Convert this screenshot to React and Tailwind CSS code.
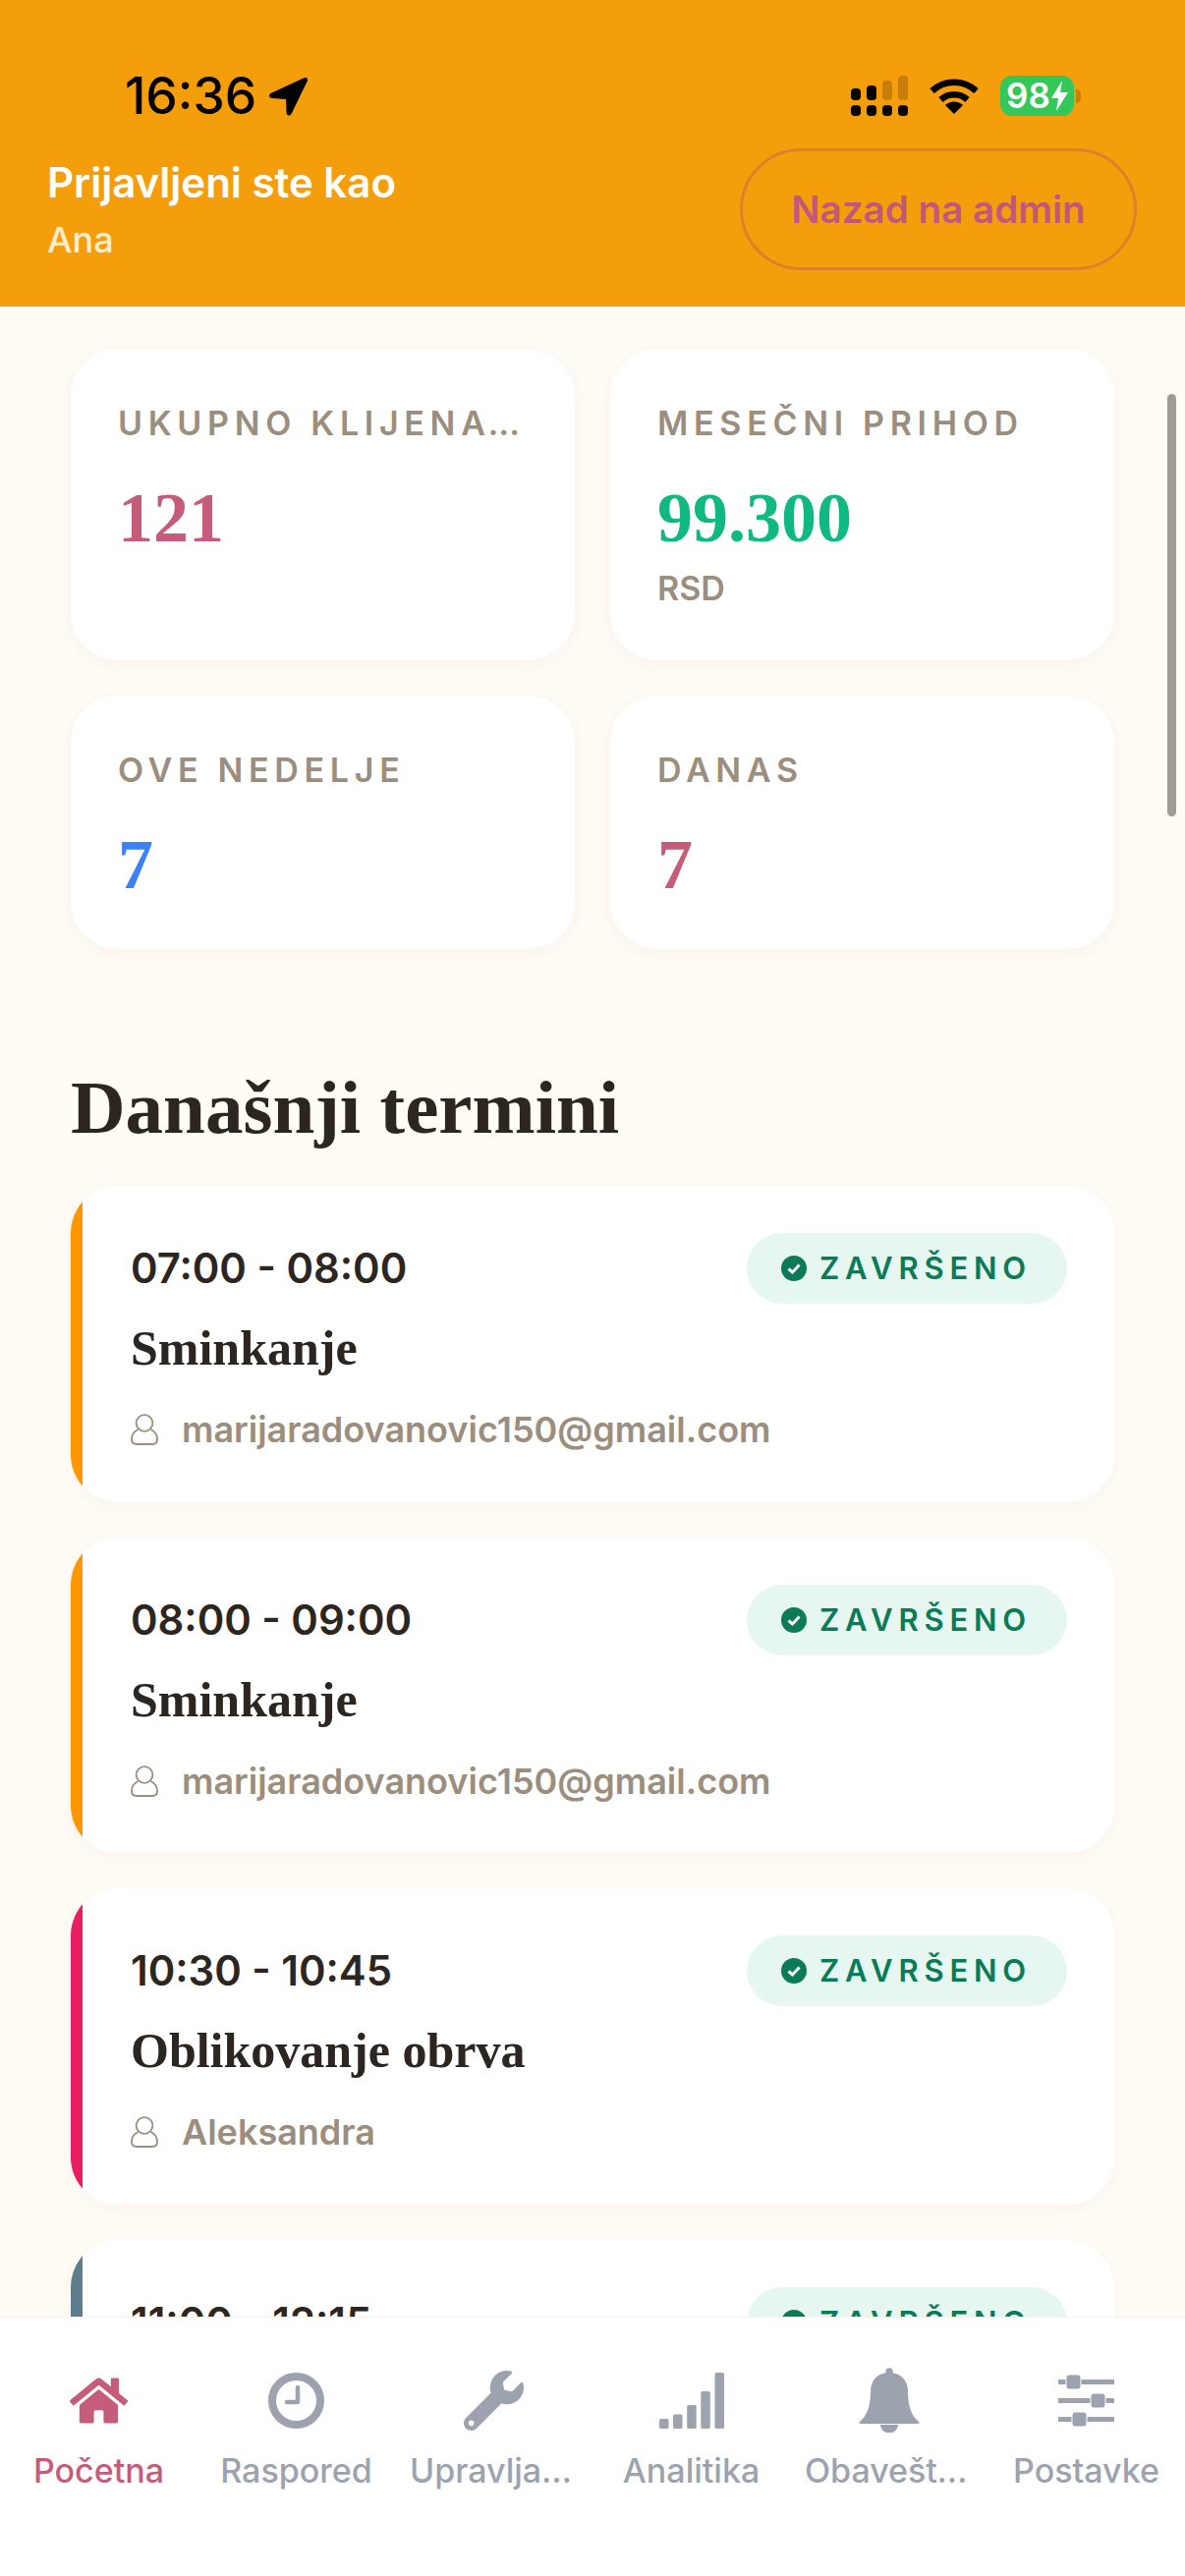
import { FaHome, FaWrench } from 'react-icons/fa'

const stats = [
  { label: 'UKUPNO KLIJENATA', value: '121', color: 'text-[#C45C7A]' },
  { label: 'MESEČNI PRIHOD', value: '99.300', color: 'text-[#10B981]', unit: 'RSD' },
  { label: 'OVE NEDELJE', value: '7', color: 'text-[#3B82F6]' },
  { label: 'DANAS', value: '7', color: 'text-[#C45C7A]' },
]

const appointments = [
  { time: '07:00 - 08:00', service: 'Sminkanje', client: 'marijaradovanovic150@gmail.com', stripe: 'bg-[#FF9800]' },
  { time: '08:00 - 09:00', service: 'Sminkanje', client: 'marijaradovanovic150@gmail.com', stripe: 'bg-[#FF9800]' },
  { time: '10:30 - 10:45', service: 'Oblikovanje obrva', client: 'Aleksandra', stripe: 'bg-[#E91E63]' },
  { time: '11:00 - 12:15', service: 'Sminkanje', client: 'Aleksandra', stripe: 'bg-[#607D8B]' },
]

function SignalIcon() {
  return (
    <svg width="58" height="41" viewBox="0 0 58 41">
      <rect x="0" y="13" width="10" height="12" rx="4" fill="#000" />
      <rect x="16" y="10" width="10" height="15" rx="4" fill="#000" />
      <rect x="32" y="5" width="10" height="20" rx="4" fill="#C77F0A" />
      <rect x="48" y="0" width="10" height="25" rx="4" fill="#C77F0A" />
      <rect x="0" y="30" width="10" height="11" rx="4" fill="#000" />
      <rect x="16" y="30" width="10" height="11" rx="4" fill="#000" />
      <rect x="32" y="30" width="10" height="11" rx="4" fill="#000" />
      <rect x="48" y="30" width="10" height="11" rx="4" fill="#000" />
    </svg>
  )
}

function WifiIcon() {
  return (
    <svg width="50" height="37" viewBox="0 0 50 37" fill="none">
      <path d="M2.5 13.5 A33 33 0 0 1 47.5 13.5" stroke="#000" strokeWidth="6.5" />
      <path d="M11.5 22.5 A20 20 0 0 1 38.5 22.5" stroke="#000" strokeWidth="6.5" />
      <path d="M25 37 L16 28 A13 13 0 0 1 34 28 Z" fill="#000" />
    </svg>
  )
}

function LocationArrow() {
  return (
    <svg width="40" height="40" viewBox="0 0 40 40">
      <path d="M35 1.5 C38 0 40 2 38.5 5 L23 37 C21 41 17.5 40 17.5 36 L17 23 L3 22 C-0.5 21.5 -1 18 2.5 16.5 Z" fill="#000" />
    </svg>
  )
}

function ClockIcon() {
  return (
    <svg width="57" height="57" viewBox="0 0 57 57" fill="none" stroke="currentColor">
      <circle cx="28.5" cy="28.5" r="24.5" strokeWidth="8" />
      <path d="M30 15 V30 H19" strokeWidth="4.5" strokeLinejoin="round" strokeLinecap="round" />
    </svg>
  )
}

function BarsIcon() {
  return (
    <svg width="66" height="57" viewBox="0 0 66 57" fill="currentColor">
      <rect x="0" y="47" width="9.5" height="10" rx="1.5" />
      <rect x="14" y="42.5" width="9.5" height="14.5" rx="1.5" />
      <rect x="28.2" y="33" width="9.5" height="24" rx="1.5" />
      <rect x="42.3" y="19" width="9.5" height="38" rx="1.5" />
      <rect x="56.5" y="0" width="9.5" height="57" rx="1.5" />
    </svg>
  )
}

function BellIcon() {
  return (
    <svg width="62" height="66" viewBox="0 0 62 66" fill="currentColor">
      <circle cx="31" cy="4" r="3.7" />
      <path d="M31 5 C20 5 12 12 12 24 C12 40 8 49 1 55 Q-0.5 57 2 57 L60 57 Q62.5 57 61 55 C54 49 50 40 50 24 C50 12 42 5 31 5 Z" />
      <path d="M22 58 A9 8.5 0 0 0 40 58 Z" />
    </svg>
  )
}

function SlidersIcon() {
  return (
    <svg width="57" height="53" viewBox="0 0 57 53" fill="currentColor">
      <rect x="0" y="5" width="57" height="5" />
      <rect x="8" y="0" width="15" height="15" rx="3" stroke="#fff" strokeWidth="1" />
      <rect x="0" y="24" width="57" height="5" />
      <rect x="33" y="19" width="15" height="15" rx="3" stroke="#fff" strokeWidth="1" />
      <rect x="0" y="43" width="57" height="5" />
      <rect x="14" y="38" width="15" height="15" rx="3" stroke="#fff" strokeWidth="1" />
    </svg>
  )
}

function PersonIcon() {
  return (
    <svg width="28" height="32" viewBox="0 0 28 32" fill="none" stroke="#9C8E7E" strokeWidth="1.8">
      <circle cx="14" cy="9.5" r="8.4" />
      <path d="M7.5 16 C3.5 18 1 21.5 1 26 C1 29.5 3 31 6 31 H22 C25 31 27 29.5 27 26 C27 21.5 24.5 18 20.5 16" />
    </svg>
  )
}

const tabs = [
  { label: 'Početna', icon: <FaHome size={59} />, active: true },
  { label: 'Raspored', icon: <ClockIcon /> },
  { label: 'Upravljanje', icon: <FaWrench size={61} /> },
  { label: 'Analitika', icon: <BarsIcon /> },
  { label: 'Obaveštenja', icon: <BellIcon /> },
  { label: 'Postavke', icon: <SlidersIcon /> },
]

function StatCard({ label, value, color, unit }) {
  return (
    <div className="min-w-0 rounded-[48px] bg-white px-[48px] pt-[56px] pb-[46px] shadow-[0_4px_16px_rgba(120,90,60,0.05)]">
      <div className="truncate text-[34px] leading-[40px] font-semibold tracking-[5.7px] text-[#9C8E7E]">{label}</div>
      <div className={`mt-[36px] font-['Liberation_Serif',serif] text-[72px] leading-[80px] font-bold ${color}`}>{value}</div>
      {unit && <div className="mt-[12px] pb-[7px] text-[34px] leading-[40px] font-semibold text-[#9C8E7E]">{unit}</div>}
    </div>
  )
}

function AppointmentCard({ time, service, client, stripe }) {
  return (
    <div className="flex h-[321.6px] shrink-0 overflow-hidden rounded-[48px] bg-white shadow-[0_4px_16px_rgba(120,90,60,0.04)]">
      <div className={`w-[12px] shrink-0 ${stripe}`} />
      <div className="min-w-0 flex-1 pl-[49px] pr-[48px] pt-[48px]">
        <div className="flex h-[72px] items-center justify-between">
          <span className="text-[41.8px] leading-[52px] font-semibold text-[#2D2520]">{time}</span>
          <span className="flex h-[72px] w-[326px] items-center gap-[13px] rounded-full bg-[#E6F7F1] pl-[35px]">
            <svg width="26" height="26" viewBox="0 0 26 26">
              <circle cx="13" cy="13" r="13" fill="#0B7A56" />
              <path d="M7.5 13.5 L11.5 17 L18.5 9.5" fill="none" stroke="#fff" strokeWidth="3" />
            </svg>
            <span className="text-[31px] leading-[36px] font-semibold tracking-[5.8px] text-[#0B7A56]">ZAVRŠENO</span>
          </span>
        </div>
        <div className="mt-[15px] font-['Liberation_Serif',serif] text-[50px] leading-[60px] font-bold text-[#2D2520]">{service}</div>
        <div className="mt-[31px] flex items-center gap-[24px]">
          <PersonIcon />
          <span className="text-[36px] leading-[44px] font-semibold text-[#9C8E7E]">{client}</span>
        </div>
      </div>
    </div>
  )
}

export default function App() {
  return (
    <div className="relative flex h-[2622px] w-[1206px] flex-col overflow-hidden bg-[#FFFBF5] font-['Inter',sans-serif]">
      <header className="h-[312px] shrink-0 bg-[#F59E0B] pt-[77px]">
        <div className="flex h-[41px] items-center pl-[127px] pr-[106px]">
          <span className="text-[51.5px] leading-[41px] font-medium text-black">16:36</span>
          <span className="ml-[13px]"><LocationArrow /></span>
          <div className="ml-auto flex items-center gap-[22px]">
            <SignalIcon />
            <WifiIcon />
            <div className="flex items-center gap-[2px]">
              <div className="flex h-[41px] w-[75px] items-center justify-center rounded-[12px] bg-[#34C759] text-[35px] leading-none font-semibold text-white">
                98
                <svg width="17" height="31" viewBox="0 0 17 31" className="ml-[1px]">
                  <path d="M11 0 L0 18 H7 L5 31 L17 12 H9 Z" fill="#fff" />
                </svg>
              </div>
              <div className="h-[14px] w-[5px] rounded-r-full bg-[#C77F0A]" />
            </div>
          </div>
        </div>
        <div className="mt-[33px] flex h-[124px] items-center justify-between pl-[48px] pr-[49px]">
          <div>
            <div className="text-[42px] leading-[50px] font-semibold text-white">Prijavljeni ste kao</div>
            <div className="mt-[11px] text-[36px] leading-[44px] font-medium text-white/80">Ana</div>
          </div>
          <button className="h-[124px] w-[404px] rounded-full border-[3px] border-[#E07F2A] pt-[2px] text-[38.6px] font-semibold text-[#C2577E]">
            Nazad na admin
          </button>
        </div>
      </header>

      <main className="min-h-0 flex-1 overflow-hidden px-[72px] pt-[43px]">
        <div className="grid grid-cols-2 gap-[36px]">
          {stats.map(s => <StatCard key={s.label} {...s} />)}
        </div>
        <h2 className="mt-[113px] mb-[32px] font-['Liberation_Serif',serif] text-[77px] leading-[96px] font-bold text-[#2D2520]">Današnji termini</h2>
        <div className="flex flex-col gap-[36px]">
          {appointments.map(a => <AppointmentCard key={a.time} {...a} />)}
        </div>
      </main>

      {/* scroll indicator floats over the content */}
      <div className="absolute top-[401px] left-[1188px] h-[430px] w-[9px] rounded-full bg-[#A09C93]" />

      <nav className="flex h-[264px] shrink-0 border-t border-[#F5F0EB] bg-white pt-[51px]">
        {tabs.map(({ label, icon, active }) => (
          <div key={label} className={`flex w-[201px] flex-col items-center ${active ? 'text-[#C45C7A]' : 'text-[#9CA3AF]'}`}>
            <div className="flex h-[66px] items-center justify-center">{icon}</div>
            <div className="mt-[19px] w-full truncate px-[15px] text-center text-[34px] leading-[40px] font-medium">{label}</div>
          </div>
        ))}
      </nav>
    </div>
  )
}
